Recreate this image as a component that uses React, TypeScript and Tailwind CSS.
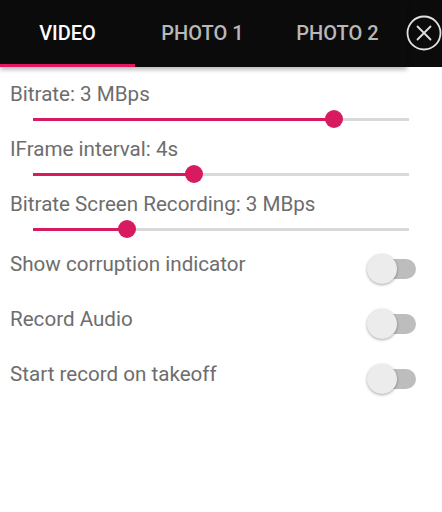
import React from "react";

const font = { fontFamily: "Roboto, 'Noto Sans', sans-serif" };

function Slider({ value }: { value: number }) {
  return (
    <div className="ml-[23px] w-[376px] h-[26px] relative flex items-center">
      <div className="w-full h-[3px] bg-[#d9d9d9]" />
      <div
        className="absolute left-0 h-[3px] bg-[#d81b60]"
        style={{ width: `${value * 100}%` }}
      />
      <div
        className="absolute w-[18px] h-[18px] rounded-full bg-[#d81b60] -translate-x-1/2"
        style={{ left: `${value * 100}%` }}
      />
    </div>
  );
}

function Switch() {
  return (
    <div className="relative w-[49px] h-[30px] mt-[2px] mr-[26px] shrink-0">
      <div className="absolute right-0 top-[5px] w-[46px] h-[20px] rounded-full bg-[#bdbdbd]" />
      <div className="absolute left-0 top-0 w-[30px] h-[30px] rounded-full bg-[#ececec] shadow-[0_1px_3px_rgba(0,0,0,0.35)]" />
    </div>
  );
}

export default function App() {
  const sliders = [
    { label: "Bitrate: 3 MBps", value: 0.8 },
    { label: "IFrame interval: 4s", value: 0.428 },
    { label: "Bitrate Screen Recording: 3 MBps", value: 0.25 },
  ];
  const toggles = ["Show corruption indicator", "Record Audio", "Start record on takeoff"];
  return (
    <div className="w-[442px] h-[512px] bg-white overflow-hidden" style={font}>
      <div className="relative z-10 h-[67px] bg-[#0b0b0b] flex">
        <div className="flex w-[407px] shadow-[0_3px_4px_rgba(0,0,0,0.25)]">
          {["VIDEO", "PHOTO 1", "PHOTO 2"].map((t, i) => (
            <div
              key={t}
              className={`relative w-[135px] flex items-center justify-center text-[20px] font-medium ${
                i === 0 ? "text-white" : "text-[#b8b8b8]"
              }`}
            >
              <span className="-mt-[2px]">{t}</span>
              {i === 0 && <div className="absolute left-0 right-0 bottom-0 h-[3px] bg-[#e0185f]" />}
            </div>
          ))}
        </div>
        <div className="flex-1 flex items-center justify-center">
          <svg width="36" height="36" viewBox="0 0 36 36" className="-ml-[2px] -mt-[1px]">
            <circle cx="18" cy="18" r="16.5" fill="none" stroke="#e0e0e0" strokeWidth="1.8" />
            <path d="M11.5 11.5 L24.5 24.5 M24.5 11.5 L11.5 24.5" stroke="#e0e0e0" strokeWidth="1.8" strokeLinecap="round" />
          </svg>
        </div>
      </div>
      <div className="pt-[15px] pl-[10px] text-[20.6px] text-[#6d6d6d]">
        {sliders.map((s) => (
          <div key={s.label} className="mb-[5px]">
            <div className="leading-6">{s.label}</div>
            <Slider value={s.value} />
          </div>
        ))}
        <div className="pt-[5px]">
          {toggles.map((t) => (
            <div key={t} className="h-[55px] flex items-start justify-between">
              <div className="leading-6">{t}</div>
              <Switch />
            </div>
          ))}
        </div>
      </div>
    </div>
  );
}
